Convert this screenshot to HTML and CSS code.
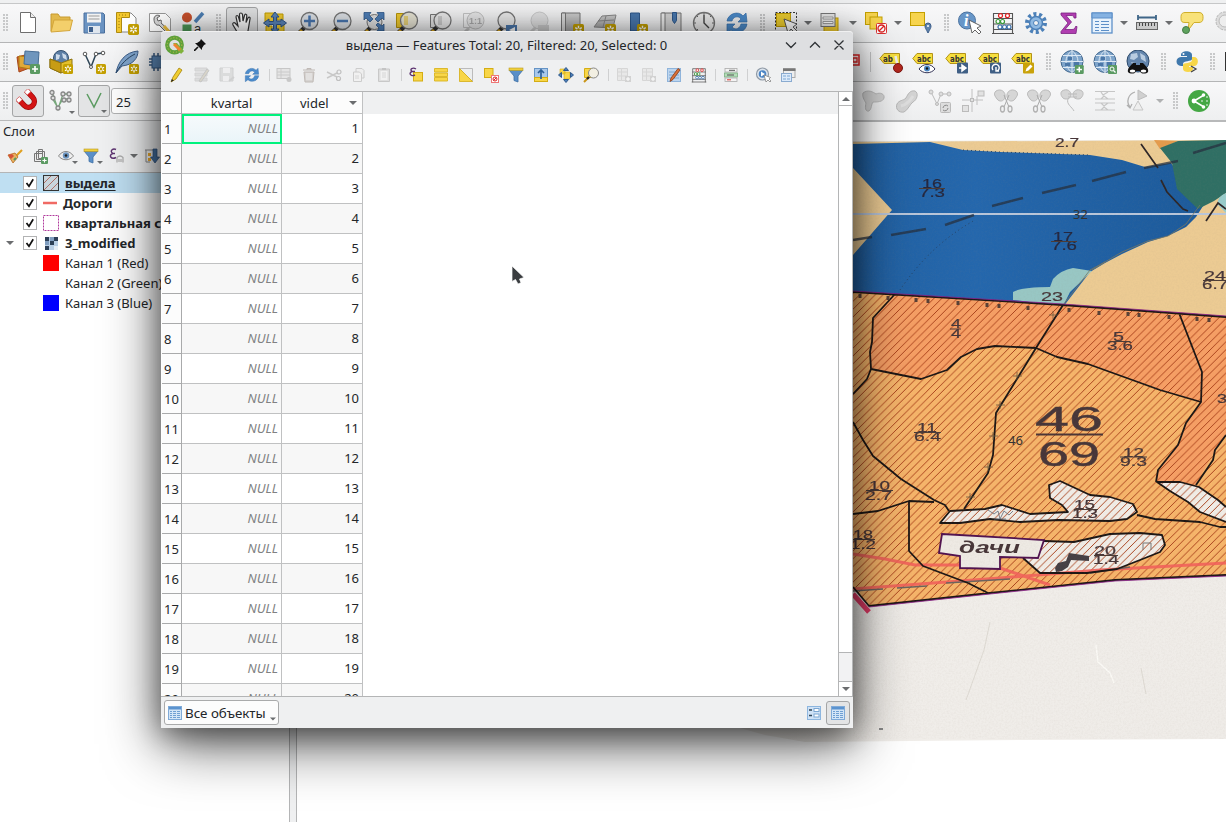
FILE: index.html
```html
<!DOCTYPE html>
<html lang="ru">
<head>
<meta charset="utf-8">
<title>QGIS</title>
<link rel="stylesheet" href="styles.css">
</head>
<body>
<svg class="defs" aria-hidden="true">
  <defs>
    <linearGradient id="gg" x1="0" y1="0" x2="0" y2="1"><stop offset="0" stop-color="#d0d0d0"/><stop offset="1" stop-color="#a4a4a4"/></linearGradient>
  </defs>
  <symbol id="star" viewBox="0 0 10 10"><rect width="10" height="10" rx="1.500" fill="#c4a000"/><path d="M5 1.500v7M2 3.200l6 3.600M8 3.200L2 6.800" stroke="#fff" stroke-width="1.300"/><circle cx="5" cy="5" r="1.200" fill="#c4a000"/></symbol>
  <symbol id="plus" viewBox="0 0 10 10"><rect width="10" height="10" rx="1.500" fill="#5a9a62"/><path d="M5 2v6M2 5h6" stroke="#fff" stroke-width="1.600"/></symbol>
  <symbol id="new" viewBox="0 0 24 24"><path d="M4.500 1.500h10l5 5v15h-15z" fill="#fff" stroke="#6e6e6e"/><path d="M14.500 1.500v5h5" fill="#eee" stroke="#6e6e6e"/></symbol>
  <symbol id="open" viewBox="0 0 24 24"><path d="M2 20V3h7l2 3h10v4" fill="#e2b94c" stroke="#c79a2e"/><path d="M2 21L5 9h18.500L21 19.500z" fill="#f3cf6b" stroke="#d3a53a"/></symbol>
  <symbol id="save" viewBox="0 0 24 24"><path d="M2 2h19l1.500 1.500V22H2z" fill="#6a93c2" stroke="#4a6f9c"/><rect x="5" y="2.500" width="14" height="9" fill="#f2f2f2"/><path d="M6.500 5h11M6.500 8h11" stroke="#999"/><rect x="6" y="15" width="12" height="7" fill="#dfe6ee"/><rect x="7" y="16" width="4" height="5" fill="#3d5e8a"/></symbol>
  <symbol id="layout" viewBox="0 0 24 24"><path d="M3 2h13l5 5v14H3z" fill="#fff" stroke="#888"/><path d="M1.500 1.500h13v5h-8v15h-5z" fill="#f3c82e" stroke="#b08c10"/><path d="M4 4h8M4 7v12" stroke="#9a7a10" stroke-dasharray="1 2"/><use href="#star" x="13" y="13" width="11" height="11"/></symbol>
  <symbol id="layman" viewBox="0 0 24 24"><path d="M1.500 2.500h16l5 5v13h-21z" fill="#fff" stroke="#999"/><path d="M6 8c0-3 3-5 6-3l-3 2 1 3 3-1c1 2 0 3 0 3l9 8-2 3-9-9c-3 1-5-2-5-6z" fill="#d8d8d8" stroke="#666"/><path d="M16 15l6 7" stroke="#e8bc3c" stroke-width="3"/></symbol>
  <symbol id="style" viewBox="0 0 24 24"><circle cx="6" cy="6.500" r="5" fill="#c8502c"/><path d="M14 11l8-9" stroke="#4d7fb5" stroke-width="3.500"/><rect x="1.500" y="13.500" width="9" height="9" fill="#4e9a58"/><text x="13" y="22" font-size="13" font-family="Liberation Sans" fill="#333">a</text></symbol>
  <symbol id="hand" viewBox="0 0 24 24"><path d="M8 22.500l-5-8.500c-1-2 1-3 2-2l3 3-2-9c0-2 2-2 2.500 0L10 11 9.500 3.500c0-2 2.500-2 3 0L13 10l1.500-5.500c.5-2 2.500-1.500 2.300.5L16 11.500l2-4.500c1-1.500 2.700-.5 2 1L18.500 17l-1 5.500" fill="#fff" stroke="#333" stroke-width="1.200"/></symbol>
  <symbol id="pan" viewBox="0 0 24 24"><path d="M2 2h10v10H2zM12 12h9v9h-9zM14 3h6v6h-6zM3 15h6v6H3z" fill="#f2cc30" stroke="#c4a000"/><path d="M12 1l4 5h-2.500v4H18V8l5.500 4-5.500 4v-2.500h-4.500V18H16l-4 5-4-5h2.500v-4.500H6V16L.5 12 6 8v2.500h4.500V6H8z" fill="#5b86bb" stroke="#30558a"/></symbol>
  <symbol id="zin" viewBox="0 0 24 24"><path d="M2 23l7-7" stroke="#333" stroke-width="4"/><path d="M3 22l3-3" stroke="#e8b020" stroke-width="3"/><circle cx="13.500" cy="10" r="8.500" fill="#dfe3e8" stroke="#777" stroke-width="1.300"/><path d="M13.500 4.500v11M8 10h11" stroke="#4a78b2" stroke-width="2.500"/></symbol>
  <symbol id="zout" viewBox="0 0 24 24"><path d="M2 23l7-7" stroke="#333" stroke-width="4"/><path d="M3 22l3-3" stroke="#e8b020" stroke-width="3"/><circle cx="13.500" cy="10" r="8.500" fill="#dfe3e8" stroke="#777" stroke-width="1.300"/><path d="M8 10h11" stroke="#4a78b2" stroke-width="2.500"/></symbol>
  <symbol id="zfull" viewBox="0 0 24 24"><path d="M2 23l7-7" stroke="#333" stroke-width="4"/><path d="M3 22l3-3" stroke="#e8b020" stroke-width="3"/><circle cx="12.500" cy="11" r="7.500" fill="#e4e4e4" stroke="#777"/><path d="M2 1.500h7L7 4l4 4-3 3-4-4-2 2zM22 1.500h-7L17 4l-4 4 3 3 4-4 2 2zM22 20h-7l2-3-3-3 2-2 4 3 2-2z" fill="#4f7fb8" stroke="#2f598c" stroke-width=".8"/></symbol>
  <symbol id="zsel" viewBox="0 0 24 24"><path d="M1.500 2.500H12v14H1.500z" fill="#f2cc30" stroke="#b8960c"/><path d="M2 23l7-7" stroke="#333" stroke-width="4"/><path d="M3 22l3-3" stroke="#e8b020" stroke-width="3"/><circle cx="14" cy="9.500" r="8.500" fill="#e9e6d6" stroke="#777" stroke-width="1.300"/><path d="M9 5h4v9H9z" fill="#e8d27a"/></symbol>
  <symbol id="zlay" viewBox="0 0 24 24"><path d="M2.500 3.500H12v13H2.500z" fill="#e6e6e6" stroke="#777"/><path d="M2 23l7-7" stroke="#333" stroke-width="4"/><path d="M3 22l3-3" stroke="#e8b020" stroke-width="3"/><circle cx="14.500" cy="9.500" r="8.500" fill="#ececec" stroke="#777" stroke-width="1.300"/><path d="M10 5h4v9h-4z" fill="#ccc"/></symbol>
  <symbol id="z11" viewBox="0 0 24 24"><g opacity=".5"><path d="M2 23l6-6" stroke="#999" stroke-width="3"/><path d="M2.500 2.500h10v14h-10z" fill="none" stroke="#999"/><circle cx="14.500" cy="9.500" r="8.500" fill="#ddd" stroke="#888"/><text x="8" y="13" font-size="9" font-weight="bold" font-family="Liberation Sans" fill="#666">1:1</text></g></symbol>
  <symbol id="zlast" viewBox="0 0 24 24"><path d="M2 23l7-7" stroke="#333" stroke-width="4"/><path d="M3 22l3-3" stroke="#e8b020" stroke-width="3"/><circle cx="12.500" cy="9.500" r="8.500" fill="#ececec" stroke="#777" stroke-width="1.300"/><rect x="12" y="14" width="11" height="10" fill="#4b78ad"/><path d="M21 16l-6 3 6 3z" fill="#fff"/></symbol>
  <symbol id="znext" viewBox="0 0 24 24"><g opacity=".4"><path d="M2 23l7-7" stroke="#999" stroke-width="3"/><circle cx="12.500" cy="9.500" r="8.500" fill="#ccc" stroke="#888"/><rect x="11" y="14" width="11" height="10" fill="#999"/></g></symbol>
  <symbol id="mapv" viewBox="0 0 24 24"><path d="M2 2h18v20H2z" fill="url(#gg)" stroke="#777"/><path d="M1.500 2h4v20h-4z" fill="#ddd" stroke="#777"/><use href="#star" x="13" y="13" width="11" height="11"/></symbol>
  <symbol id="map3" viewBox="0 0 24 24"><path d="M1 16L9 5l14-1-3 13z" fill="url(#gg)" stroke="#888"/><path d="M5 10l16-1M13 5l-3 11" stroke="#888" fill="none"/><use href="#star" x="12" y="13" width="11" height="11"/></symbol>
  <symbol id="bmk" viewBox="0 0 24 24"><path d="M4.500 2h9v18H4.500z" fill="#4a79b0" stroke="#2f598c"/><use href="#star" x="11" y="13" width="11" height="11"/></symbol>
  <symbol id="bmks" viewBox="0 0 24 24"><path d="M3 2h19v20H3z" fill="#d5d5d5" stroke="#777"/><path d="M2 2h4v20H2z" fill="#eee" stroke="#777"/><path d="M13.500 1.500h4v8l-2 3-2-3z" fill="#4a79b0" stroke="#2f598c"/></symbol>
  <symbol id="clock" viewBox="0 0 24 24"><circle cx="12" cy="12" r="10.500" fill="#ececec" stroke="#777" stroke-width="1.300"/><path d="M12 4v8l5 5" fill="none" stroke="#444" stroke-width="1.400"/><path d="M12 2v2M22 12h-2M2 12h2M19 5l-1 1M5 5l1 1M5 19l1-1" stroke="#666"/></symbol>
  <symbol id="refresh" viewBox="0 0 24 24"><path d="M2 10C3 3 13-1 18 5l3-3 1 9h-9l3-3c-3-4-8-2-9 2zM22 13c-1 8-11 11-16 6l-4 3 0-9h8l-3 3c4 4 8 1 9-3z" fill="#4c8ccc" stroke="#3570ad" stroke-width=".7"/></symbol>
  <symbol id="select" viewBox="0 0 24 24"><rect x="1.500" y="1.500" width="21" height="19" fill="none" stroke="#333" stroke-dasharray="2 1.500"/><rect x="2.500" y="2.500" width="14" height="13" fill="#efcf30" stroke="#c4a000"/><path d="M10 8l4 14 3-4 5 5 2-2-5-5 4-3z" fill="#fff" stroke="#555"/></symbol>
  <symbol id="selval" viewBox="0 0 24 24"><rect x="5" y="7" width="14" height="14" fill="#f2cc30" stroke="#c4a000"/><rect x="2" y="2.500" width="14" height="13" fill="#e6e6e6" stroke="#777"/><path d="M4 6h10v2H4zM4 10.500h10v2H4z" fill="#fff" stroke="#888" stroke-width=".8"/></symbol>
  <symbol id="desel" viewBox="0 0 24 24"><rect x="1.500" y="1.500" width="12" height="12" fill="#f7d44e" stroke="#c4a000"/><rect x="6" y="6" width="12" height="12" fill="#f7d44e" stroke="#c4a000"/><rect x="12.500" y="12.500" width="10" height="10" rx="1" fill="#fff" stroke="#d33"/><circle cx="17.500" cy="17.500" r="3.500" fill="none" stroke="#d22" stroke-width="1.300"/><path d="M15 20l5-5" stroke="#d22" stroke-width="1.300"/></symbol>
  <symbol id="selloc" viewBox="0 0 24 24"><rect x="1.500" y="1.500" width="14" height="13" fill="#f7d44e" stroke="#c4a000"/><path d="M19 22c-2-4-3-5-3-7a3 3 0 016 0c0 2-1 3-3 7z" fill="#5e83ac" stroke="#3d5e8a"/><circle cx="19" cy="15" r="1" fill="#fff"/></symbol>
  <symbol id="ident" viewBox="0 0 24 24"><circle cx="9" cy="9.500" r="8.500" fill="#6796c8" stroke="#4c739f"/><text x="6" y="15" font-size="16" font-weight="bold" font-style="italic" font-family="Liberation Serif" fill="#fff">i</text><path d="M11 9l3 13 3-3 4 4 2-2-4-4 4-2z" fill="#fff" stroke="#555" stroke-width=".9"/></symbol>
  <symbol id="abac" viewBox="0 0 24 24"><path d="M2.500 23V2.500h19V23M1 22.500h22M2 7.500h20M2 13h20M2 18.500h20" fill="none" stroke="#555" stroke-width="1.100"/><g stroke-width="1.200" fill="#fff"><g stroke="#d22"><circle cx="9.500" cy="4.700" r="2"/><circle cx="16.500" cy="4.700" r="2"/></g><g stroke="#3a9a3a"><circle cx="7" cy="10.500" r="2"/><circle cx="11.500" cy="10.500" r="2"/></g><g stroke="#3a6ea8"><circle cx="9" cy="16" r="2"/><circle cx="13.500" cy="16" r="2"/><circle cx="18" cy="16" r="2"/></g></g></symbol>
  <symbol id="gear" viewBox="0 0 24 24"><circle cx="12" cy="12" r="9" fill="none" stroke="#4c80b8" stroke-width="4" stroke-dasharray="3 2.650"/><circle cx="12" cy="12" r="6.500" fill="#8fb9e2" stroke="#4c80b8" stroke-width="1.500"/><circle cx="12" cy="12" r="2.500" fill="#f2f3f4" stroke="#4c80b8"/></symbol>
  <symbol id="sigma" viewBox="0 0 24 24"><path d="M4 2h15v5h-2c0-2-1-2.500-3-2.500H9L14.500 11 8 18.500h7c2 0 3-1 3.500-3h1.500l-1 7H4v-2l7-8.500L4 4z" fill="#b03db0" stroke="#7a2280" stroke-width=".8"/></symbol>
  <symbol id="table" viewBox="0 0 24 24"><rect x="2" y="2" width="20" height="20" fill="#e8f2fc" stroke="#5c8fc8" stroke-width="1.300"/><path d="M2 2h20v5H2z" fill="#85b2e2" stroke="#5c8fc8"/><path d="M5 10.500h4M11 10.500h8M5 13.500h4M11 13.500h8M5 16.500h4M11 16.500h8M5 19.500h4M11 19.500h8" stroke="#5c8fc8" stroke-width="1.200"/></symbol>
  <symbol id="table16" viewBox="0 0 16 16"><rect x="1.500" y="1.500" width="13" height="13" fill="#d3e5f7" stroke="#7faad8"/><path d="M2 2h12v2.500H2z" fill="#5b93cf"/><path d="M3 6.500h2M6 6.500h3M10 6.500h3M3 8.500h2M6 8.500h3M10 8.500h3M3 10.500h2M6 10.500h3M10 10.500h3M3 12.500h2M6 12.500h3M10 12.500h3" stroke="#6f9fd2"/></symbol>
  <symbol id="measure" viewBox="0 0 24 24"><path d="M3 6.500h18M3 4v5M21 4v5" stroke="#3f6688" stroke-width="1.800"/><rect x="1.500" y="11.500" width="21" height="7" fill="#c9c9c9" stroke="#666"/><path d="M4.500 12v3M7.500 12v3M10.500 12v3M13.500 12v3M16.500 12v3M19.500 12v3" stroke="#444"/></symbol>
  <symbol id="tip" viewBox="0 0 24 24"><path d="M5 1.500h14c3 0 4 2 4 4v2c0 3-2 4-4 4h-5l-6 8 1-8H5c-3 0-4-1-4-4v-2c0-3 2-4 4-4z" fill="#f8e27a" stroke="#cfae2a"/><circle cx="6" cy="19" r="3.500" fill="#5ea35e" stroke="#467c46"/></symbol>
  <symbol id="graygear" viewBox="0 0 24 24"><circle cx="12" cy="10" r="9" fill="#ddd" stroke="#b5b5b5" stroke-dasharray="3 1"/><circle cx="12" cy="10" r="6" fill="#eee" stroke="#bbb"/></symbol>

  <symbol id="dsm" viewBox="0 0 24 24"><path d="M1 7l12-3 3 13-13 5z" fill="#cf6430" stroke="#a54518"/><path d="M3 6l13 1-2 12-11-2z" fill="#e0a93a" stroke="#b07c10"/><path d="M9 1l14 1-1 14-14-2z" fill="#6f96bd" stroke="#476d94"/><use href="#plus" x="14" y="14" width="10" height="10"/></symbol>
  <symbol id="gpkg" viewBox="0 0 24 24"><circle cx="12" cy="8" r="7.500" fill="#5d7fa6" stroke="#34506f"/><path d="M7 4l4 1-1 4-3 1zM13 3l4 2 1 5-4-2z" fill="#cfdceb"/><path d="M1 9l11 4 11-4v9l-11 5-11-5z" fill="#e4c02c" stroke="#8d7310"/><path d="M1 9l11 4v10L1 18z" fill="#c79c14" stroke="#8d7310"/><use href="#star" x="14" y="14" width="10" height="10"/></symbol>
  <symbol id="shp" viewBox="0 0 24 24"><path d="M3 4l6 13L14 4l7-1" fill="none" stroke="#2f4657" stroke-width="1.500"/><g fill="#fff" stroke="#555"><circle cx="3" cy="4" r="1.800"/><circle cx="14" cy="4" r="1.800"/><circle cx="21" cy="3" r="1.800"/><circle cx="9" cy="17" r="1.500"/></g><use href="#star" x="14" y="14" width="10" height="10"/></symbol>
  <symbol id="quill" viewBox="0 0 24 24"><path d="M1 23C3 12 10 2 23 1c0 7-5 14-16 15z" fill="#7fa4cc" stroke="#3d5e8a"/><path d="M1 23C6 14 12 8 20 4" fill="none" stroke="#28435f"/><use href="#star" x="14" y="14" width="10" height="10"/></symbol>
  <symbol id="chip" viewBox="0 0 24 24"><rect x="4" y="6" width="16" height="12" fill="#5c87b5" stroke="#34577f"/><path d="M6 3v3M10 3v3M14 3v3M18 3v3M6 18v3M10 18v3M14 18v3M1 9h3M1 12h3M1 15h3" stroke="#34577f" stroke-width="1.500"/></symbol>
  <symbol id="redlab" viewBox="0 0 24 24"><rect x="1" y="5" width="21" height="10" fill="#fbeaea" stroke="#d22" stroke-width="1.500"/><path d="M16 8h4v4h-4z" fill="none" stroke="#d22" stroke-width="1.300"/></symbol>
  <symbol id="tag" viewBox="0 0 24 24"><path d="M5 3.500h15.500v10H5L.8 8.500z" fill="#f7df3e" stroke="#b39318"/></symbol>
  <symbol id="abc" viewBox="0 0 24 24"><use href="#tag" width="24" height="24"/><text x="5" y="11.500" font-size="8.500" font-weight="bold" font-family="DejaVu Sans" textLength="14" lengthAdjust="spacingAndGlyphs" fill="#333">abc</text></symbol>
  <symbol id="labpin" viewBox="0 0 24 24"><use href="#tag" width="24" height="24"/><text x="4" y="11.500" font-size="8.500" font-weight="bold" font-family="DejaVu Sans" textLength="10" lengthAdjust="spacingAndGlyphs" fill="#333">ab</text><path d="M16.500 6l2 9" stroke="#eee" stroke-width="2.500"/><circle cx="19" cy="18" r="4.500" fill="#b3271e" stroke="#7c1510"/></symbol>
  <symbol id="labeye" viewBox="0 0 24 24"><use href="#abc" width="24" height="24"/><path d="M7 19c4-6 12-6 16 0-4 5-12 5-16 0z" fill="#fff" stroke="#335"/><circle cx="15" cy="18.500" r="3" fill="#4b87c4"/><circle cx="15" cy="18.500" r="1.200" fill="#111"/></symbol>
  <symbol id="labmove" viewBox="0 0 24 24"><use href="#abc" width="24" height="24"/><rect x="12" y="12.500" width="11" height="11" rx="1" fill="#3f5f85"/><path d="M14 18h5M17 15l4 3-4 3z" stroke="#fff" stroke-width="1.500" fill="#fff"/></symbol>
  <symbol id="labrot" viewBox="0 0 24 24"><use href="#abc" width="24" height="24"/><rect x="12" y="12.500" width="11" height="11" rx="1" fill="#3f5f85"/><path d="M15 20a3.500 3.500 0 114 1M18 17v4h3" stroke="#fff" stroke-width="1.400" fill="none"/></symbol>
  <symbol id="labed" viewBox="0 0 24 24"><use href="#abc" width="24" height="24"/><rect x="12" y="12.500" width="11" height="11" rx="1" fill="#c9a20a"/><path d="M14.500 21.500l1-3 4-4 2 2-4 4z" fill="#fff"/></symbol>
  <symbol id="globe" viewBox="0 0 24 24"><circle cx="12" cy="11.500" r="11" fill="#7fa5cb" stroke="#42678e"/><path d="M1 11.500h22M3 5.500h18M3 17.500h18M12 .5v22M12 .5c-8 6-8 16 0 22M12 .5c8 6 8 16 0 22" fill="none" stroke="#dfeaf5"/><path d="M8 7h4v3H8zM14 12h5v4h-5zM5 13h5v3H5z" fill="#4b77a8"/></symbol>
  <symbol id="globeadd" viewBox="0 0 24 24"><use href="#globe" width="24" height="24"/><use href="#plus" x="14.500" y="15" width="9.500" height="9"/></symbol>
  <symbol id="globes" viewBox="0 0 24 24"><use href="#globe" width="24" height="24"/><rect x="15" y="15" width="9" height="9" rx="1" fill="#5a9a62"/><circle cx="19" cy="19" r="2" fill="none" stroke="#fff"/><path d="M20.500 20.500l2 2" stroke="#fff" stroke-width="1.300"/></symbol>
  <symbol id="metas" viewBox="0 0 24 24"><circle cx="12" cy="11" r="11" fill="#6486ad" stroke="#2d4a6b"/><path d="M5 4l6-1 1 4-4 3-4-1zM14 3l5 3 1 6-5-3zM5 12l4 1-1 4z" fill="#b9cce0"/><path d="M2 22c-1-3 2-6 5-9h3v2h4v-2h3c3 3 6 6 5 9-2 2.500-8 2-8-1h-4c0 3-6 3.500-8 1z" fill="#111"/><ellipse cx="6.500" cy="21" rx="2.800" ry="1.500" fill="#fff"/><ellipse cx="17.500" cy="21" rx="2.800" ry="1.500" fill="#fff"/></symbol>
  <symbol id="python" viewBox="0 0 24 24"><path d="M6 5c0-5 11-5 11 0v4c0 3-9 1-9 5v2H6c-6 0-6-9 0-9h6V6H6z" fill="#3f78ac"/><circle cx="8.500" cy="4" r="1" fill="#fff"/><path d="M18 19c0 4-10 4-10 0v-4c0-3 9-1 9-5V7h2c5 0 5 8 1 9h-6v1h4z" fill="#f7d648"/><path d="M16 16l5 3-5 3" fill="none" stroke="#444" stroke-width="1.300"/></symbol>
  <symbol id="black" viewBox="0 0 24 24"><rect x="1" y="2" width="20" height="19" fill="#333"/></symbol>

  <symbol id="magnet" viewBox="0 0 24 24"><g transform="rotate(-43 12 12) translate(2 2.500) scale(.84)"><path d="M5 1v11a7 7 0 0014 0V1" fill="none" stroke="#9a0808" stroke-width="6.500"/><path d="M5 4v8a7 7 0 0014 0V4" fill="none" stroke="#d31414" stroke-width="5"/><path d="M2 .5h6v5H2zM16 .5h6v5h-6z" fill="#fff" stroke="#c33" stroke-width=".7"/></g></symbol>
  <symbol id="snapall" viewBox="0 0 24 24"><path d="M3 3l6 17L14 5M3 9l6 10M14 5h7M9 18l5-8h7" fill="none" stroke="#77a87b" stroke-width="1.300"/><g fill="#ddd" stroke="#888" stroke-width="1.300"><circle cx="3" cy="3.500" r="2"/><circle cx="14" cy="5" r="2"/><circle cx="20" cy="5" r="2"/><circle cx="4" cy="9" r="2"/><circle cx="15" cy="11" r="2"/><circle cx="20" cy="11" r="2"/><circle cx="9" cy="19" r="2"/></g></symbol>
  <symbol id="snapv" viewBox="0 0 24 24"><path d="M5 5l7 13 7-14" fill="none" stroke="#5b9b61" stroke-width="1.500"/></symbol>
  <symbol id="g1" viewBox="0 0 24 24"><path d="M1 4c5-4 10-1 13 1 4-2 9 0 8 4s-7 4-11 4c-2 2-1 7-4 9-4 1-4-4-3-8C2 11 0 7 1 4z" fill="#d3d3d3" stroke="#bcbcbc"/></symbol>
  <symbol id="g2" viewBox="0 0 24 24"><path d="M2 15c2-4 6-3 9-6 2-4 4-8 9-7 4 2 2 9-2 11-3 2-5 8-9 10-5 1-9-3-7-8z" fill="#d3d3d3" stroke="#b8b8b8"/><path d="M6 17c4-1 9-5 12-10" stroke="#dedede" stroke-width="3" fill="none"/></symbol>
  <symbol id="g3" viewBox="0 0 24 24"><path d="M3 3l6 12 4-10h8" fill="none" stroke="#bbb"/><g fill="#ddd" stroke="#bbb"><circle cx="3" cy="3" r="2"/><circle cx="13" cy="5" r="2"/><circle cx="21" cy="5" r="2"/><circle cx="9" cy="15" r="1.500"/><rect x="12.500" y="13.500" width="10" height="10" rx="1"/></g><path d="M15 19a3 3 0 015-2M20 19a3 3 0 01-5 2" fill="none" stroke="#888"/></symbol>
  <symbol id="g4" viewBox="0 0 24 24"><path d="M11 0v23M1 11h21M16 7v9" stroke="#c0c0c0" fill="none"/><g fill="#e2e2e2" stroke="#bbb"><rect x="9.500" y="9.500" width="3" height="3"/><rect x="17" y="2" width="6" height="5"/><rect x="1.500" y="16.500" width="6" height="6"/></g></symbol>
  <symbol id="g5" viewBox="0 0 24 24"><path d="M2 2c5-3 10 1 9 6s-6 5-8 2-4-5-1-8zM22 2c-5-3-10 1-9 6s6 5 8 2 4-5 1-8z" fill="#d6d6d6" stroke="#bbb"/><path d="M10 6l5 12M15 6l-5 12" stroke="#aaa"/><ellipse cx="8.500" cy="20" rx="2" ry="3" fill="none" stroke="#b0b0b0" stroke-width="1.300"/><ellipse cx="16" cy="20" rx="2" ry="3" fill="none" stroke="#b0b0b0" stroke-width="1.300"/></symbol>
  <symbol id="g6" viewBox="0 0 24 24"><path d="M2 2c5-3 9 0 9 4s-6 5-8 3-3-5-1-7zM22 2c-5-3-9 0-9 4s6 5 8 3 3-5 1-7z" fill="#d6d6d6" stroke="#bbb"/><path d="M8 5h9M8 8h9M8 10c-2 5 4 8 6 12" stroke="#bbb" fill="none"/></symbol>
  <symbol id="g7" viewBox="0 0 24 24"><path d="M2 2.500h20M2 10h20M2 14h20M2 21h20M8 3l2 3 5-3M8 10l3-3 4 3M8 14l3 3 4-3M8 21l3-3 4 3" fill="none" stroke="#c6c6c6" stroke-width="1.200"/></symbol>
  <symbol id="g8" viewBox="0 0 24 24"><path d="M12 1l9 6-9 4z" fill="#d0d0d0" stroke="#bdbdbd"/><path d="M7 21l5-9 5 9z" fill="#eee" stroke="#c6c6c6"/><path d="M9 3C2 5 0 13 4 18M1 16l3 3 2-4" fill="none" stroke="#b0b0b0" stroke-width="1.300"/></symbol>
  <symbol id="share" viewBox="0 0 24 24"><circle cx="12" cy="12" r="11" fill="#44a744"/><path d="M17 6L7 12l10 6" fill="none" stroke="#fff" stroke-width="1.600"/><g fill="#fff"><circle cx="7" cy="12" r="2.400"/><circle cx="16.500" cy="6" r="1.800"/><circle cx="16.500" cy="18" r="1.800"/><circle cx="20" cy="12" r=".8"/><circle cx="15" cy="12" r=".8"/><circle cx="20" cy="8" r=".8"/><circle cx="20" cy="16" r=".8"/></g></symbol>

  <symbol id="pencil" viewBox="0 0 16 16"><path d="M2 15l2-5 6-9 3 2-6 9z" fill="#f0cd30" stroke="#a5830a" stroke-width=".8"/><path d="M2 15l.8-3 2 1.500z" fill="#222"/></symbol>
  <symbol id="multi" viewBox="0 0 16 16"><path d="M1 1h12v3H1zM1 6h12v3H1zM1 11h12v3H1z" fill="#cfcfcf" stroke="#bebebe"/><path d="M5 14L13 2l2 1.500L7 15z" fill="#c9c2ae" stroke="#a9a9a9"/></symbol>
  <symbol id="gsave" viewBox="0 0 16 16"><path d="M1 1h13v13H1z" fill="#cfcfcf" stroke="#bbb"/><path d="M4 1h7v5H4zM4 9h6v5H4z" fill="#eee"/><path d="M10 14l5-4" stroke="#bbb" stroke-width="2"/></symbol>
  <symbol id="gadd" viewBox="0 0 16 16"><rect x="1" y="1.500" width="13" height="10" fill="#e4e4e4" stroke="#c6c6c6"/><path d="M1 5h13M1 8h13M5 2v9" stroke="#cacaca"/><circle cx="13" cy="12.500" r="2.500" fill="#c8c8c8"/></symbol>
  <symbol id="trash" viewBox="0 0 16 16"><path d="M2 3h12M6 3V1.500h4V3M3 5h10l-1 10H4z" fill="#d6d3d1" stroke="#c0bab6"/><path d="M6 6v7M8 6v7M10 6v7" stroke="#eee"/></symbol>
  <symbol id="cut" viewBox="0 0 16 16"><path d="M1 5l10 5M1 11l10-5" stroke="#c8c8c8" stroke-width="1.400"/><circle cx="13" cy="5" r="2" fill="none" stroke="#c0c0c0" stroke-width="1.200"/><circle cx="12.500" cy="11.500" r="2" fill="none" stroke="#c0c0c0" stroke-width="1.200"/></symbol>
  <symbol id="copy" viewBox="0 0 16 16"><path d="M5 1.500h6l2 2V11H5z" fill="#eee" stroke="#ccc"/><path d="M2.500 5h6l2 2v7.500h-8z" fill="#f1f1f1" stroke="#ccc"/><path d="M4 9h4M4 11h4" stroke="#d6d6d6"/></symbol>
  <symbol id="paste" viewBox="0 0 16 16"><path d="M2.500 2h11v12.500h-11z" fill="#dedede" stroke="#c8c8c8"/><path d="M4.500 4h7v9h-7z" fill="#f1f1f1"/><path d="M6 1h4v2H6z" fill="#c4c4c4"/><path d="M6 6h4M6 8h4M6 10h4" stroke="#d6d6d6"/></symbol>
  <symbol id="exsel" viewBox="0 0 16 16"><rect x="5.500" y="5.500" width="9" height="8.500" fill="#f8d648" stroke="#d4ad14"/><path d="M8 2C5 0 1 2 4 4.500 0 6 3 10 7 8M4 4.500h3" fill="none" stroke="#5d3370" stroke-width="1.400"/></symbol>
  <symbol id="selall" viewBox="0 0 16 16"><path d="M1.500 1.500h13v3.500h-13zM1.500 6h13v3.500h-13zM1.500 10.500h13V14h-13z" fill="#f8d648" stroke="#d9b420" stroke-width=".9"/></symbol>
  <symbol id="inv" viewBox="0 0 16 16"><path d="M1.500 1.500h13v13z" fill="#eceeef" stroke="#bbb"/><path d="M1.500 1.500v13h13z" fill="#f8d648" stroke="#d4ad14" stroke-width=".8"/></symbol>
  <symbol id="desel16" viewBox="0 0 16 16"><rect x="1.500" y="1.500" width="8.500" height="9" fill="#f8d648" stroke="#d4ad14"/><rect x="8.500" y="8.500" width="7" height="7" fill="#fff" stroke="#e77"/><circle cx="12" cy="12" r="2" fill="none" stroke="#d22"/><path d="M10.500 13.500l3-3" stroke="#d22"/></symbol>
  <symbol id="filter" viewBox="0 0 16 16"><path d="M1 3h14l-5 6v6l-4-1.500V9z" fill="#5a8fc8" stroke="#3e70a6" stroke-width=".8"/><rect x="1" y="1" width="14" height="2.500" fill="#efcf3c" stroke="#b99a20" stroke-width=".6"/></symbol>
  <symbol id="totop" viewBox="0 0 16 16"><rect x="1.500" y="1.500" width="13" height="13" fill="#a9c8ea" stroke="#6594c6"/><rect x="1.500" y="10.500" width="13" height="4" fill="#f8d648" stroke="#d4ad14"/><path d="M8 3v9M5 6l3-3 3 3" fill="none" stroke="#2d5f98" stroke-width="1.700"/></symbol>
  <symbol id="pan16" viewBox="0 0 16 16"><path d="M2 2h5v5H2zM6 5h6v7H6z" fill="#f8d648" stroke="#d4ad14" stroke-width=".6"/><path d="M8 .5l2.500 3h-5zM8 15.500l2.500-3h-5zM.5 8l3-2.500v5zM15.500 8l-3-2.500v5z" fill="#4c7fb8" stroke="#2f598c"/></symbol>
  <symbol id="zsel16" viewBox="0 0 16 16"><path d="M1.500 1.500H9v9H1.500z" fill="#f8d648" stroke="#d4ad14"/><path d="M1 15l5-5" stroke="#c99518" stroke-width="2"/><path d="M4 12l2-2" stroke="#222" stroke-width="2.300"/><circle cx="10.500" cy="6" r="5" fill="#f2efe2" stroke="#888"/></symbol>
  <symbol id="gcol" viewBox="0 0 16 16"><path d="M1.500 1.500h4v12h-4zM5.500 1.500h6v12h-6zM1.500 5h10M1.500 9h10" fill="#e8e8e8" stroke="#d6d6d6"/><rect x="9" y="9" width="6" height="6" fill="#d2d2d2"/><path d="M12 10v4M10 12h4" stroke="#fff"/></symbol>
  <symbol id="calc" viewBox="0 0 16 16"><rect x="1.500" y="1.500" width="13" height="13" fill="#bdd5ee" stroke="#8fb4db"/><path d="M3 5h10M3 8h10M3 11h10" stroke="#7ba6d2"/><path d="M4 14.500l1-3.500 7-9.500 2 1.500-7 9.500z" fill="#d9713a" stroke="#8a3a14" stroke-width=".8"/></symbol>
  <symbol id="cond" viewBox="0 0 16 16"><rect x="2" y="1.500" width="12" height="3.500" fill="#f4f4f4" stroke="#aaa" stroke-width=".8"/><rect x="1.500" y="6" width="13" height="4" fill="#b4dcb8" stroke="#7cb082" stroke-width=".8"/><rect x="2" y="11" width="12" height="3.500" fill="#f4f4f4" stroke="#aaa" stroke-width=".8"/><path d="M6 3.300h6M4 8h7" stroke="#555"/><path d="M4 12.800h4" stroke="#d33"/></symbol>
  <symbol id="act" viewBox="0 0 16 16"><circle cx="7.500" cy="7" r="6" fill="#dde5ee" stroke="#8f9aa6" stroke-width="1.200"/><circle cx="7.500" cy="7" r="3.800" fill="#4c86c6"/><path d="M6 4.500l4 2.500-4 2.500z" fill="#fff"/><path d="M9 8l2 7 2-2 2 2 1-1-2-2 1.500-1.500z" fill="#fff" stroke="#777" stroke-width=".7"/></symbol>
  <symbol id="dock" viewBox="0 0 16 16"><rect x="3.500" y="1.500" width="11.500" height="9" fill="#eee" stroke="#aaa"/><path d="M3 1.500h12.500V4H3z" fill="#777"/><rect x="1.500" y="6.500" width="10" height="8" fill="#dceafa" stroke="#8aabd0"/><path d="M3 9h3M7 9h3M3 12h3M7 12h3" stroke="#7ba6d2"/></symbol>
  <symbol id="form" viewBox="0 0 16 16"><rect x="1.500" y="1.500" width="13" height="13" fill="#cfe2f6" stroke="#8db6df"/><path d="M3 5h3M3 10.500h3" stroke="#2f4657" stroke-width="1.400"/><rect x="8" y="3.500" width="5" height="3" fill="#fff" stroke="#7ba6d2"/><rect x="8" y="9" width="5" height="3" fill="#fff" stroke="#7ba6d2"/></symbol>
  <symbol id="brush" viewBox="0 0 16 16"><path d="M9 8l6-6" stroke="#e0a020" stroke-width="2.200"/><path d="M1 7l7-2 3 4-5 6z" fill="#e8b060" stroke="#b86a20" stroke-width=".8"/><path d="M1 7l3 4 3-3-2-2z" fill="#d4523a"/><path d="M7 12l2-2" stroke="#5a9a62" stroke-width="2"/></symbol>
  <symbol id="grp" viewBox="0 0 16 16"><path d="M2.500 5.500h8v8h-8zM4.500 3.500h8v8h-8zM6.500 1.500h4v9h-4z" fill="#eee" stroke="#777"/><use href="#plus" x="9" y="9" width="7" height="7"/></symbol>
  <symbol id="eye" viewBox="0 0 16 16"><path d="M.5 8c4-6 11-6 15 0-4 5-11 5-15 0z" fill="#eee" stroke="#888"/><circle cx="8" cy="7.500" r="3.200" fill="#6b94c0"/><circle cx="8" cy="7.500" r="1.300" fill="#222"/></symbol>
  <symbol id="eps" viewBox="0 0 16 16"><path d="M7 1.500C4 0 0 3 4 5.500-1 7 2 12 7 9.500M4 5.500h2" fill="none" stroke="#5d3370" stroke-width="1.400"/><path d="M8 14.500V9.500q3-3 6 0v5M10 11v3M12 11v3" fill="none" stroke="#aaa" stroke-width="1.200"/></symbol>
  <symbol id="expand" viewBox="0 0 16 16"><path d="M1 2h8M2 2v12h4" stroke="#888" fill="none"/><path d="M4 5h3v3H4zM4 10h3v3H4z" fill="#e8a830"/><path d="M9 1h4v8h2.500L11 15 6.500 9H9z" fill="#4673a5" stroke="#2f4f78" stroke-width=".7"/></symbol>
  <symbol id="check" viewBox="0 0 14 14"><rect x=".5" y=".5" width="13" height="13" fill="#fff" stroke="#b2b3b4"/><path d="M3.500 7L6 10.300 10.200 3.300" fill="none" stroke="#111" stroke-width="1.700"/></symbol>
</svg>

<div class="app">
  <div class="topstrip"></div>
  <div class="tb">
    <i class="grip first"></i>
    <span class="c"><svg><use href="#new"/></svg></span><span class="c"><svg><use href="#open"/></svg></span><span class="c"><svg><use href="#save"/></svg></span><span class="c"><svg><use href="#layout"/></svg></span><span class="c"><svg><use href="#layman"/></svg></span><span class="c"><svg><use href="#style"/></svg></span>
    <i class="grip"></i>
    <span class="c on"><svg><use href="#hand"/></svg></span><span class="c"><svg><use href="#pan"/></svg></span><span class="c"><svg><use href="#zin"/></svg></span><span class="c"><svg><use href="#zout"/></svg></span><span class="c"><svg><use href="#zfull"/></svg></span><span class="c"><svg><use href="#zsel"/></svg></span><span class="c"><svg><use href="#zlay"/></svg></span><span class="c"><svg><use href="#z11"/></svg></span><span class="c"><svg><use href="#zlast"/></svg></span><span class="c"><svg><use href="#znext"/></svg></span><span class="c"><svg><use href="#mapv"/></svg></span><span class="c"><svg><use href="#map3"/></svg></span><span class="c"><svg><use href="#bmk"/></svg></span><span class="c"><svg><use href="#bmks"/></svg></span><span class="c"><svg><use href="#clock"/></svg></span><span class="c"><svg><use href="#refresh"/></svg></span>
    <i class="grip"></i>
    <span class="c"><svg><use href="#select"/></svg></span><b class="dd"></b><span class="c"><svg><use href="#selval"/></svg></span><b class="dd"></b><span class="c"><svg><use href="#desel"/></svg></span><b class="dd"></b><span class="c"><svg><use href="#selloc"/></svg></span>
    <i class="grip"></i>
    <span class="c"><svg><use href="#ident"/></svg></span><span class="c"><svg><use href="#abac"/></svg></span><span class="c"><svg><use href="#gear"/></svg></span><span class="c"><svg><use href="#sigma"/></svg></span><span class="c"><svg><use href="#table"/></svg></span><b class="dd"></b><span class="c"><svg><use href="#measure"/></svg></span><b class="dd"></b><span class="c"><svg><use href="#tip"/></svg></span><span class="c"><svg><use href="#graygear"/></svg></span>
  </div>
  <div class="tb">
    <i class="grip first"></i>
    <span class="c"><svg><use href="#dsm"/></svg></span><span class="c"><svg><use href="#gpkg"/></svg></span><span class="c"><svg><use href="#shp"/></svg></span><span class="c"><svg><use href="#quill"/></svg></span><span class="c"><svg><use href="#chip"/></svg></span>
    <i class="gap2"></i>
    <span class="c"><svg><use href="#redlab"/></svg></span><i class="vsep"></i><span class="c"><svg><use href="#labpin"/></svg></span><span class="c"><svg><use href="#labeye"/></svg></span><span class="c"><svg><use href="#labmove"/></svg></span><span class="c"><svg><use href="#labrot"/></svg></span><span class="c"><svg><use href="#labed"/></svg></span>
    <i class="grip"></i>
    <span class="c"><svg><use href="#globeadd"/></svg></span><span class="c"><svg><use href="#globes"/></svg></span><span class="c"><svg><use href="#metas"/></svg></span>
    <i class="grip"></i><span class="c"><svg><use href="#python"/></svg></span><i class="grip"></i><span class="c"><svg><use href="#black"/></svg></span>
  </div>
  <div class="tb last">
    <i class="grip first"></i>
    <span class="c on"><svg><use href="#magnet"/></svg></span><span class="c mini"><svg><use href="#snapall"/></svg></span><span class="c on mini"><svg><use href="#snapv"/></svg></span><span class="spin">25</span>
    <i class="gap3"></i>
    <span class="c"><svg><use href="#g1"/></svg></span><span class="c"><svg><use href="#g2"/></svg></span><span class="c"><svg><use href="#g3"/></svg></span><span class="c"><svg><use href="#g4"/></svg></span><span class="c"><svg><use href="#g5"/></svg></span><span class="c"><svg><use href="#g5"/></svg></span><span class="c"><svg><use href="#g6"/></svg></span><span class="c"><svg><use href="#g7"/></svg></span><span class="c"><svg><use href="#g8"/></svg></span><b class="dd dim"></b>
    <i class="grip"></i><span class="c"><svg><use href="#share"/></svg></span>
  </div>

  <div class="main">
    <aside class="side">
      <div class="stitle">Слои</div>
      <div class="stools">
        <svg><use href="#brush"/></svg><svg><use href="#grp"/></svg><span class="mini"><svg><use href="#eye"/></svg></span><span class="mini"><svg><use href="#filter"/></svg></span><svg><use href="#eps"/></svg><b class="dd"></b><svg><use href="#expand"/></svg>
      </div>
      <div class="tree">
        <div class="n sel"><svg class="ck"><use href="#check"/></svg><svg class="sym" viewBox="0 0 16 16"><rect x=".5" y=".5" width="15" height="15" fill="#c9d5dc" stroke="#333"/><path d="M1 8l7-7M1 15L15 1M8 15l7-7" stroke="#b07068" fill="none"/></svg><span class="cur">выдела</span></div>
        <div class="n"><svg class="ck"><use href="#check"/></svg><svg class="sym line" viewBox="0 0 14 16"><path d="M0 8h14" stroke="#f06a64" stroke-width="2.500"/></svg><span>Дороги</span></div>
        <div class="n"><svg class="ck"><use href="#check"/></svg><svg class="sym" viewBox="0 0 16 16"><rect x=".5" y=".5" width="15" height="15" fill="#fff" stroke="#b03a9c" stroke-dasharray="2 1"/></svg><span>квартальная сеть</span></div>
        <div class="n"><b class="dd tw"></b><svg class="ck"><use href="#check"/></svg><svg class="sym" viewBox="0 0 16 16"><path d="M2 2h13v13H2z" fill="#b9cfe6"/><path d="M2 2h4v4H2zM11 2h4v4h-4zM7 6h4v4H7zM2 11h4v4H2z" fill="#2c3f57"/><path d="M7 2h4v4H7zM2 6h4v4H2z" fill="#7f9dbf"/><path d="M11 11h4v4h-4z" fill="#e6eef7"/></svg><span>3_modified</span></div>
        <div class="n leaf"><i class="sw red"></i><span>Канал 1 (Red)</span></div>
        <div class="n leaf"><i class="sw"></i><span>Канал 2 (Green)</span></div>
        <div class="n leaf"><i class="sw blue"></i><span>Канал 3 (Blue)</span></div>
      </div>
    </aside>
    <div class="split"></div>
    <svg class="map" viewBox="297 122 929 700">
      <defs>
        <pattern id="hatch" width="7.800" height="7.800" patternUnits="userSpaceOnUse"><path d="M-2 9.800L9.800-2M-2 2L2-2M5.800 9.800L9.800 5.800" stroke="#a83e18" stroke-width=".95"/></pattern>
        <linearGradient id="paper" x1="0" y1="0" x2="1" y2="1"><stop offset="0" stop-color="#e8e4dd"/><stop offset=".35" stop-color="#ebe8e2"/><stop offset=".45" stop-color="#f1eeea"/><stop offset="1" stop-color="#efece8"/></linearGradient>
        <linearGradient id="sea" x1="0" y1="0" x2="1" y2="0"><stop offset="0" stop-color="#2060a2"/><stop offset=".35" stop-color="#2467ad"/><stop offset="1" stop-color="#1c5a9b"/></linearGradient>
        <filter id="soft"><feGaussianBlur stdDeviation=".35"/></filter>
        <filter id="grain" x="0" y="0" width="1" height="1"><feTurbulence type="fractalNoise" baseFrequency=".55" numOctaves="2"/><feColorMatrix values="0 0 0 0 .3  0 0 0 0 .25  0 0 0 0 .2  0 0 0 .45 -.16"/></filter>
      </defs>
      <path d="M740 141H853L1154 140H1226V739L1020 740 805 742 765 735 740 728z" fill="url(#paper)"/>
      <path d="M990 622l-6 28-18 50M1141 668l5 26" fill="none" stroke="#dedad3"/>
      <path d="M1096 645l2 17 12 11 4 10" fill="none" stroke="#fbfaf6" stroke-width="1.300"/>
      <path d="M879 729h4" stroke="#888" stroke-width="2"/>
      <path d="M853 142L1226 140V320L853 300z" fill="#eccb93"/>
      <path d="M853 144l77-2 33 8 37 2 90 3 32 5 23 7 26-4 32 43-7 11-10 10-18 9-20 6-26 12-17 9-15 9-27 35-210-13v-39l39-45-39-42z" fill="url(#sea)"/>
      <path d="M1154 140l24 1-18 8z" fill="#e59b4c"/>
      <path d="M1160 148l18-7 48-1v53l-12 8-16 8-21-20-5-26z" fill="#2f6f64"/>
      <path d="M1226 193q-10 4-8 12l8 8z" fill="#98cccb"/>
      <path d="M1013 300l0-8q8-5 37-5l3-8q8-9 20-11l19 3-22 21-7 14z" fill="#98c7c4"/>
      <path d="M853 214h373" stroke="#b9c6da" stroke-width="2"/>
      <path d="M900 290q30-45 75-70M963 150l37 2 90 3" stroke="#26405f" stroke-dasharray="1 3" fill="none"/>
      <path d="M853 240l19-3M891 235l35-6M945 225l29-10M992 206l31-8M1042 193l34-8M1092 181l34-9M1144 168l34-7M1193 153l33-10" stroke="#25303f" stroke-width="2.400" opacity=".75"/>
      <path d="M1141 144l17 24M1161 180l6 12 16 17 5 2M1206 221l12-18 8 6" stroke="#2c2527" stroke-width="1.700" fill="none"/>
      <path d="M1092 270l13-8M1200 205l-14 19-18 12-20 5-26 11-17 10-15 8-27 35" fill="none" stroke="#7a775f" stroke-width=".8"/>

      <path d="M853 292l210 13 163 12v258l-111 5-125 13-121 13-16-19z" fill="#f7b56a"/>
      <path d="M895 294l168 11-27 43-41-2-18 3-16 8-14 13-26 9-50-10-1-19 3-32zM1063 305l116 8 23 59-1 30-41-12-72-26-31-7-21-9zM1179 313l47 4v118l-11 15-20 36-39-4 2-12 20-25 8-22 15-21-1-30z" fill="#f79f64"/>
      <path d="M950 511l35-2 17-4 28 9 38-2-6-7-12-7-1-13 11-4 30 14 20 2 23 7 4 8-10 7-17 2-52-1-38 2-30-3-30 4-20 0z" fill="#f1ede7"/>
      <path d="M1044 541l30 1 36-8 30-1 22 2 3 10-5 7-20 8-23 9-30 4h-47l-17-15 15-1z" fill="#f1ede7"/>
      <path d="M1157 482h23l19 5 19 13 8 7v15l-26-10-12-10-18-11z" fill="#f1ede7"/>
      <path d="M853 292l210 13 163 12v258l-111 5-125 13-121 13-16-19z" fill="url(#hatch)"/>
      <path d="M853 554l32 5 30 6 45 0M1000 568l50 17M853 589l147-11 100-8 126-7" stroke="#f2605a" stroke-width="3" fill="none" opacity=".9"/>
      <path d="M853 591l30-2M897 588l30-2M946 583l64-4M1090 573l40-6" stroke="#6b635e" stroke-width="1.500"/>
      <path d="M853 594l16 18" stroke="#e33a66" stroke-width="5"/>
      <g fill="none" stroke="#1c1614" stroke-width="1.800" stroke-linejoin="round">
        <path d="M950 511l35-2 17-4 28 9 38-2-6-7-12-7-1-13 11-4 30 14 20 2 23 7 4 8-10 7-17 2-52-1-38 2-30-3-30 4-20 0z"/>
        <path d="M853 292l210 13 163 12M895 294l-22 24-1 24-2 10 1 17 50 10 26-9 14-13 16-8 18-3 41 2 27-43M1036 348l21 9 31 7 72 26 41 12M1179 313l23 59-1 30-15 21-8 22-20 25-2 12M871 369l-4 10-14 15M853 422l10 18 10 16 28 23 33 21 11 5 4 6M1036 348l-40 65-3 42-5 18-24 36M853 514l25-3 31-10 25 1M909 501v50l14 15 45 17 20 10M1137 515l18 4 45 3 20 5h6M1226 435l-11 15-2 10-17 25M853 587l16 19 121-13 125-13 111-5"/>
        <path d="M1044 541l30 1 36-8 30-1 22 2 3 10-5 7-20 8-23 9-30 4h-47l-17-15M1226 507l-8-7-19-13-19-5h-23l13 9 18 11 12 10 26 10"/>
      </g>
      <path d="M853 291l210 13 163 12M869 607l121-13 125-13 111-5" stroke="#8e1e8c" stroke-width=".8" fill="none"/>
      <path d="M942 534l102 6-6 18-38-1v12l-40-1v-12l-21-3z" fill="#eeeae4" stroke="#51124f" stroke-width="1.800"/>
      <path d="M860 294v4M888 296v4M916 298v4M928 299v4M958 301v4M987 303v4M999 304v4M1028 306v4M1069 308v4M1099 311v4M1128 312v4M1139 313v4M1169 315v4M1197 317v4M1209 318v4" stroke="#584035" stroke-width="3"/>
      <path d="M1055 568l3-5 8-2 3-8 20 3v5l-18-1-3 7-6 4-6 1z" fill="#453f43"/>
      <path d="M1143 550v-7h8v7" fill="none" stroke="#777"/>
      <g stroke="#6b5a40" stroke-width=".8"><path d="M1013 376h9M1017 372v8M996 405h9M1000 401v8M989 436h9M993 432v8M984 467h9M988 463v8M966 497h9M970 493v8M1049 315h9M1053 311v8"/></g>
      <path d="M988 510l6 4 4-3 2 8 4-8 5 4 4-4M994 519h12" fill="none" stroke="#5c6675" stroke-width=".8"/>
      <g class="scan" filter="url(#soft)">
        <g class="wet"><text x="922" y="188" textLength="20" lengthAdjust="spacingAndGlyphs">16</text><text x="919" y="197" textLength="26" lengthAdjust="spacingAndGlyphs">7.3</text><text x="1053" y="241" textLength="20" lengthAdjust="spacingAndGlyphs">17</text><text x="1051" y="250" textLength="26" lengthAdjust="spacingAndGlyphs">7.6</text></g>
        <text x="1055" y="147" textLength="24" lengthAdjust="spacingAndGlyphs">2.7</text><text x="1041" y="301" textLength="22" lengthAdjust="spacingAndGlyphs">23</text><text x="1204" y="280" textLength="22" lengthAdjust="spacingAndGlyphs">24</text><text x="1202" y="289" textLength="26" lengthAdjust="spacingAndGlyphs">6.7</text>
        <text x="951" y="328" textLength="10" lengthAdjust="spacingAndGlyphs">4</text><text x="951" y="338" textLength="10" lengthAdjust="spacingAndGlyphs">4</text><text x="1113" y="341" textLength="11" lengthAdjust="spacingAndGlyphs">5</text><text x="1107" y="350" textLength="26" lengthAdjust="spacingAndGlyphs">3.6</text>
        <text x="917" y="432" textLength="20" lengthAdjust="spacingAndGlyphs">11</text><text x="914" y="441" textLength="27" lengthAdjust="spacingAndGlyphs">6.4</text><text x="1123" y="457" textLength="21" lengthAdjust="spacingAndGlyphs">12</text><text x="1120" y="466" textLength="27" lengthAdjust="spacingAndGlyphs">9.3</text>
        <text x="869" y="490" textLength="21" lengthAdjust="spacingAndGlyphs">10</text><text x="865" y="500" textLength="27" lengthAdjust="spacingAndGlyphs">2.7</text><text x="1074" y="509" textLength="21" lengthAdjust="spacingAndGlyphs">15</text><text x="1072" y="518" textLength="26" lengthAdjust="spacingAndGlyphs">1.3</text>
        <text x="853" y="539" textLength="20" lengthAdjust="spacingAndGlyphs">18</text><text x="850" y="549" textLength="26" lengthAdjust="spacingAndGlyphs">1.2</text><text x="1094" y="555" textLength="22" lengthAdjust="spacingAndGlyphs">20</text><text x="1093" y="564" textLength="26" lengthAdjust="spacingAndGlyphs">1.4</text><text x="1217" y="403" textLength="10" lengthAdjust="spacingAndGlyphs">3</text>
        <path d="M919 188.500h26M1051 241.500h26M950 329h11M1110 341.500h20M914 432.500h27M1120 457h27M866 490.500h27M1074 509.500h24M853 539.500h22M1094 555.500h24M1203 280.500h23" stroke="#4b3a36"/>
        <text class="big" x="1035" y="431" textLength="68" lengthAdjust="spacingAndGlyphs">46</text><text class="big" x="1038" y="466" textLength="62" lengthAdjust="spacingAndGlyphs">69</text><path d="M1036 434.500h67" stroke="#4b3434" stroke-width="2"/>
        <text class="dachi" x="959" y="553" textLength="61" lengthAdjust="spacingAndGlyphs">дачи</text>
      </g>
      <g class="lab"><text x="1073" y="219">32</text><text x="1008" y="445">46</text></g>
      <path d="M853 141h373v598H853z" filter="url(#grain)" opacity=".3"/>
    </svg>
  </div>
</div>

<section class="win">
  <header class="wt">
    <svg class="logo" viewBox="0 0 20 20"><circle cx="9.500" cy="10" r="7.300" fill="none" stroke="#5fa03a" stroke-width="4.200"/><circle cx="9.500" cy="10" r="7.300" fill="none" stroke="#c8c24c" stroke-width="1" stroke-dasharray="1 2"/><path d="M8 8h4l7 8-3 3z" fill="#7fb23c"/><path d="M9 9l6 6" stroke="#ef8330" stroke-width="3"/></svg>
    <svg class="pin" viewBox="0 0 12 12"><path d="M7 0l5 5-2 1-2 3 0 2L1 4h2l3-2z" fill="#111"/><path d="M4 8l-4 4" stroke="#111" stroke-width="1.600"/></svg>
    <h1>выдела — Features Total: 20, Filtered: 20, Selected: 0</h1>
    <svg class="ctl" viewBox="0 0 62 12"><path d="M1 3.500l5 5 5-5M25 8.500l5-5 5 5M49.500 1.500l9 9M58.500 1.500l-9 9" fill="none" stroke="#2f3336" stroke-width="1.300"/></svg>
  </header>
  <div class="wtb">
    <svg><use href="#pencil"/></svg><svg class="off"><use href="#multi"/></svg><svg class="off"><use href="#gsave"/></svg><svg><use href="#refresh"/></svg><i></i>
    <svg><use href="#gadd"/></svg><svg><use href="#trash"/></svg><svg><use href="#cut"/></svg><svg><use href="#copy"/></svg><svg><use href="#paste"/></svg><i></i>
    <svg><use href="#exsel"/></svg><svg><use href="#selall"/></svg><svg><use href="#inv"/></svg><svg><use href="#desel16"/></svg><svg><use href="#filter"/></svg><svg><use href="#totop"/></svg><svg><use href="#pan16"/></svg><svg><use href="#zsel16"/></svg><i></i>
    <svg><use href="#gcol"/></svg><svg><use href="#gcol"/></svg><svg><use href="#calc"/></svg><svg><use href="#abac"/></svg><i></i><svg><use href="#cond"/></svg><i></i><svg><use href="#act"/></svg><svg><use href="#dock"/></svg>
  </div>
  <div class="body">
    <div class="grid">
      <div class="r h"><span class="a"></span><span class="k">kvartal</span><span class="v">videl<b class="dd"></b></span><span class="rest"></span></div>
      <div class="r cell"><span class="a">1</span><span class="k">NULL</span><span class="v">1</span></div>
      <div class="r"><span class="a">2</span><span class="k">NULL</span><span class="v">2</span></div>
      <div class="r"><span class="a">3</span><span class="k">NULL</span><span class="v">3</span></div>
      <div class="r"><span class="a">4</span><span class="k">NULL</span><span class="v">4</span></div>
      <div class="r"><span class="a">5</span><span class="k">NULL</span><span class="v">5</span></div>
      <div class="r"><span class="a">6</span><span class="k">NULL</span><span class="v">6</span></div>
      <div class="r"><span class="a">7</span><span class="k">NULL</span><span class="v">7</span></div>
      <div class="r"><span class="a">8</span><span class="k">NULL</span><span class="v">8</span></div>
      <div class="r"><span class="a">9</span><span class="k">NULL</span><span class="v">9</span></div>
      <div class="r"><span class="a">10</span><span class="k">NULL</span><span class="v">10</span></div>
      <div class="r"><span class="a">11</span><span class="k">NULL</span><span class="v">11</span></div>
      <div class="r"><span class="a">12</span><span class="k">NULL</span><span class="v">12</span></div>
      <div class="r"><span class="a">13</span><span class="k">NULL</span><span class="v">13</span></div>
      <div class="r"><span class="a">14</span><span class="k">NULL</span><span class="v">14</span></div>
      <div class="r"><span class="a">15</span><span class="k">NULL</span><span class="v">15</span></div>
      <div class="r"><span class="a">16</span><span class="k">NULL</span><span class="v">16</span></div>
      <div class="r"><span class="a">17</span><span class="k">NULL</span><span class="v">17</span></div>
      <div class="r"><span class="a">18</span><span class="k">NULL</span><span class="v">18</span></div>
      <div class="r"><span class="a">19</span><span class="k">NULL</span><span class="v">19</span></div>
      <div class="r"><span class="a">20</span><span class="k">NULL</span><span class="v">20</span></div>
    </div>
    <div class="sb"><div class="ar"><b class="dd up"></b></div><div class="track"></div><div class="thumb"></div><div class="ar dn"><b class="dd"></b></div></div>
  </div>
  <footer class="wf">
    <span class="all"><svg><use href="#table16"/></svg>Все объекты<b class="dd"></b></span>
    <span class="vb"><svg><use href="#form"/></svg></span><span class="vb on"><svg><use href="#table16"/></svg></span>
  </footer>
</section>
<svg class="mouse" viewBox="0 0 14 20"><path d="M1 1v15.500l3.500-2L7 19l3-1.300-1.500-3.700 4.500-1.500z" fill="#3a3d40" stroke="#fff" stroke-width=".7"/></svg>
</body>
</html>
```
FILE: styles.css
```css
* { box-sizing: border-box; }
body { margin: 0; width: 1226px; height: 822px; overflow: hidden; position: relative; font: 13.33px/20px "Noto Sans", sans-serif; color: #232629; background: #fff; }
.defs { position: absolute; width: 0; height: 0; }
.app { display: flex; flex-direction: column; height: 822px; }
.topstrip { height: 4px; background: #eff0f1; border-bottom: 1px solid #c6c7c8; flex: none; }
.tb { display: flex; align-items: center; height: 39px; flex: none; overflow: hidden; background: linear-gradient(#f8f8f9, #eeeff0); border-bottom: 1px solid #b4b5b6; }
.tb.last { height: 40px; border-bottom: 2px solid #b8b9ba; }
.tb > * { flex: none; }
.c { width: 33px; height: 32px; display: flex; align-items: center; justify-content: center; position: relative; }
.c svg { width: 24px; height: 24px; }
.c.on { width: 32px; margin: 0 0 0 1px; border: 1px solid #a4a5a6; border-radius: 3px; background: #e3e4e5; }
.mini { position: relative; }
.mini::after { content: ""; position: absolute; right: 2px; bottom: 3px; border: 3px solid transparent; border-top-color: #6b6d6f; border-bottom: 0; }
.grip { width: 16px; height: 18px; background: radial-gradient(circle at 1px 1px, #c6c7c8 .7px, transparent 1px) 0 0 / 3px 3px; background-clip: content-box; padding: 0 3px 0 7px; background-origin: content-box; }
.grip.first { width: 11px; padding: 0 3px 0 3px; }
.dd { width: 12px; display: flex; justify-content: center; }
.dd::before { content: ""; border: 4px solid transparent; border-top-color: #6b6d6f; border-bottom: 0; }
.dd.dim::before { border-top-color: #b0b1b2; }
.dd.up::before { border: 4px solid transparent; border-bottom-color: #6b6d6f; border-top: 0; }
.gap2 { width: 656px; }
.gap3 { width: 626px; }
.vsep { width: 9px; height: 20px; background: linear-gradient(#c4c5c6, #c4c5c6) 5px 0 / 1px 100% no-repeat; }
.spin { width: 120px; height: 26px; margin-left: 1px; border: 1px solid #b0b1b2; border-radius: 3px; background: #fff; padding: 3px 4px; font-size: 13px; }
.main { display: flex; flex: 1; min-height: 0; margin-top: -1px; }
.side { width: 289px; display: flex; flex-direction: column; background: #eff0f1; }
.stitle { height: 21px; padding: 0 3px; font-size: 13px; }
.stools { height: 31px; display: flex; align-items: center; padding: 0 0 3px 7px; gap: 9.4px; border-bottom: 1px solid #b4b5b6; }
.stools svg { width: 16px; height: 16px; flex: none; display: block; }
.stools .mini::after { right: -4px; bottom: 0; }
.stools .dd { margin: 0 -5.500px; }
.tree { flex: 1; background: #fff; font-size: 13px; }
.n { height: 20px; display: flex; align-items: center; padding-left: 23px; font-weight: 700; white-space: nowrap; }
.n.sel { background: #bfdff2; }
.cur { text-decoration: underline; text-underline-offset: 2px; }
.ck { width: 14px; height: 14px; margin-right: 6px; flex: none; }
.sym { width: 16px; height: 16px; margin-right: 6px; flex: none; }
.sym.line { width: 14px; }
.tw { margin: 0 7px 0 -19px; }
.leaf { font-weight: 400; padding-left: 43px; }
.sw { width: 16px; height: 16px; margin-right: 6px; }
.red { background: #f00; }
.blue { background: #00f; }
.split { width: 8px; background: #eff0f1; border: solid #b4b5b6; border-width: 0 1px; }
.map { width: 929px; height: 700px; margin-top: 1px; flex: none; display: block; background: #fff; }
.scan { fill: #463638; }
.scan text { font: 12px "Liberation Sans", sans-serif; stroke: #463638; stroke-width: .2px; }
.scan .wet text { fill: #25283f; stroke: #25283f; }
.scan text.big { font-size: 35px; stroke-width: .4px; }
.scan text.dachi { font: italic 700 17px "Liberation Sans", sans-serif; stroke: none; }
.lab text { font: 13px "Noto Sans", sans-serif; fill: #333; }

.win { position: absolute; left: 161px; top: 31px; width: 692px; height: 697px; display: flex; flex-direction: column; background: #eff0f1; border-radius: 4px 4px 0 0; box-shadow: 0 16px 56px rgba(0,0,0,.66), 0 6px 28px rgba(0,0,0,.4); }
.wt { height: 29px; display: flex; align-items: center; background: #dedfe1; border-radius: 4px 4px 0 0; border-top: 1px solid #f0f0f1; padding: 0 6px 2px 4px; flex: none; }
.logo { width: 20px; height: 20px; }
.pin { width: 12px; height: 12px; margin-left: 9px; }
.wt h1 { flex: 1; margin: 0; padding-left: 22px; text-align: center; font: 13px/20px "Noto Sans", sans-serif; }
.ctl { width: 62px; height: 12px; }
.wtb { height: 32px; flex: none; display: flex; align-items: center; padding: 0 0 2px 3.500px; border-bottom: 1px solid #b4b5b6; }
.wtb svg { width: 16px; height: 16px; margin: 0 4.500px; flex: none; }
.wtb .off { opacity: .6; }
.wtb i { width: 7.200px; height: 12px; flex: none; background: linear-gradient(#cfd0d1, #cfd0d1) 4px 0 / 1px 100% no-repeat; }
.body { flex: 1; display: flex; min-height: 0; background: #fff; padding-left: 1px; }
.grid { flex: 1; overflow: hidden; }
.r { display: flex; height: 30px; line-height: 28px; font-size: 13px; }
.r span { flex: none; border: solid #c0c1c2; border-width: 0 1px 1px 0; }
.r:nth-child(odd) .k, .r:nth-child(odd) .v { background: #f7f7f7; }
.r .a { width: 20px; padding-left: 2px; line-height: 31px; border-color: #a9aaab; background: #fcfcfc; }
.r .k { width: 100px; text-align: right; padding-right: 3px; font-style: italic; color: #808182; }
.r .v { width: 81px; text-align: right; padding-right: 3px; }
.r.h { height: 22px; line-height: 22px; }
.r.h .k, .r.h .v { background: #fcfcfc; font-style: normal; color: #232629; text-align: center; padding: 0; }
.r.h .v { display: flex; padding: 0 3px 0 18px; justify-content: space-between; align-items: center; }
.r.h .rest { flex: 1; border: 0; background: #eff0f1; }
.r.cell .k { border: 2px solid #00f27d; margin-right: 0; line-height: 25px; padding-right: 2px; background: linear-gradient(#f6fafc, #eaf5f9); }
.sb { width: 15px; display: flex; flex-direction: column; border: solid #b4b5b6; border-width: 0 1px; }
.ar { height: 14px; display: flex; align-items: center; justify-content: center; border-bottom: 1px solid #b4b5b6; }
.ar.dn { border: 0; }
.track { flex: 1; }
.thumb { height: 30px; background: #f2f2f3; border: solid #b4b5b6; border-width: 1px 0; }
.wf { height: 32px; flex: none; border-top: 1px solid #b4b5b6; display: flex; align-items: center; padding: 0 3px; }
.all { width: 115px; height: 25px; border: 1px solid #a9aaab; border-radius: 3px; background: #fcfcfc; display: flex; align-items: center; font-size: 13.330px; padding-left: 2px; gap: 2px; margin-right: auto; white-space: nowrap; }
.all svg { width: 16px; height: 16px; flex: none; }
.all .dd { margin: 13px 0 0 -1px; transform: scale(.75); }
.vb { width: 24px; height: 24px; display: flex; align-items: center; justify-content: center; }
.vb svg { width: 16px; height: 16px; }
.vb.on { border: 1px solid #a4a5a6; border-radius: 3px; background: #e3e4e5; }
.mouse { position: absolute; left: 511px; top: 264px; width: 14px; height: 22px; }
```
